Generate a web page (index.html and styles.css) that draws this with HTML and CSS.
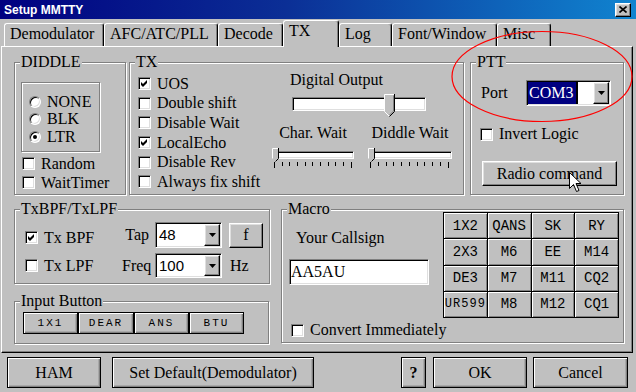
FILE: index.html
```html
<!DOCTYPE html>
<html lang="en">
<head>
    <meta charset="UTF-8">
    <title>Setup MMTTY</title>
    <link rel="stylesheet" href="styles.css">
</head>
<body>
<div class="window">
    <div class="titlebar">
        <span class="title">Setup MMTTY</span>
        <span class="close raised"><svg width="8" height="7" viewBox="0 0 8 7"><path d="M0.5 0.5L7.5 6.5M7.5 0.5L0.5 6.5" stroke="#000" stroke-width="1.6"/></svg></span>
    </div>

    <div class="tabs">
        <div class="tab t-demod">Demodulator</div>
        <div class="tab t-afc">AFC/ATC/PLL</div>
        <div class="tab t-decode">Decode</div>
        <div class="tab t-tx active">TX</div>
        <div class="tab t-log">Log</div>
        <div class="tab t-font">Font/Window</div>
        <div class="tab t-misc">Misc</div>
    </div>

    <div class="page">
        <div class="row">
            <div class="group diddle">
                <span class="legend">DIDDLE</span>
                <div class="etched radios">
                    <div class="opt radio-row"><span class="radio"></span>NONE</div>
                    <div class="opt radio-row"><span class="radio"></span>BLK</div>
                    <div class="opt radio-row"><span class="radio on"></span>LTR</div>
                </div>
                <div class="diddle-checks">
                    <div class="opt"><span class="check"></span>Random</div>
                    <div class="opt"><span class="check"></span>WaitTimer</div>
                </div>
            </div>

            <div class="group txg">
                <span class="legend">TX</span>
                <div class="tx-body">
                    <div class="tx-checks">
                        <div class="opt"><span class="check"><svg width="7" height="7" viewBox="0 0 7 7"><path d="M0 2L2 4L6 0V3L2 7L0 5Z"/></svg></span>UOS</div>
                        <div class="opt"><span class="check"></span>Double shift</div>
                        <div class="opt"><span class="check"></span>Disable Wait</div>
                        <div class="opt"><span class="check"><svg width="7" height="7" viewBox="0 0 7 7"><path d="M0 2L2 4L6 0V3L2 7L0 5Z"/></svg></span>LocalEcho</div>
                        <div class="opt"><span class="check"></span>Disable Rev</div>
                        <div class="opt"><span class="check"></span>Always fix shift</div>
                    </div>
                    <div class="tx-sliders">
                        <div class="do-label">Digital Output</div>
                        <div class="track big">
                            <svg class="thumb big-thumb" width="11" height="23" viewBox="0 0 11 23">
                                <path d="M0.5 0.5H10.5V17.5L5.5 22.5L0.5 17.5Z" fill="#c0c0c0"/>
                                <path d="M0.5 17.5V0.5H10" fill="none" stroke="#fff"/>
                                <path d="M10.5 0V17.5L5.5 22.5" fill="none" stroke="#000"/>
                                <path d="M9.5 1.5V17L5.5 21" fill="none" stroke="#808080"/>
                                <path d="M0.5 17.5L5 22" fill="none" stroke="#fff"/>
                            </svg>
                        </div>
                        <div class="small-sliders">
                            <div class="small-slider">
                                <div class="slider-label">Char. Wait</div>
                                <div class="track small">
                                    <svg class="thumb small-thumb" width="7" height="14" viewBox="0 0 7 14">
                                        <path d="M0.5 0.5H6.5V10.5L3.5 13.5L0.5 10.5Z" fill="#c0c0c0"/>
                                        <path d="M0.5 10.5V0.5H6" fill="none" stroke="#fff"/>
                                        <path d="M6.5 0V10.5L3.5 13.5" fill="none" stroke="#000"/>
                                    </svg>
                                </div>
                                <svg class="ticks" width="82" height="6" viewBox="0 0 82 6"><path d="M2.5 0V6M10.5 0V4M17.5 0V4M25.5 0V4M33.5 0V4M40.5 0V4M48.5 0V4M56.5 0V4M63.5 0V4M71.5 0V4M79.5 0V6" stroke="#000"/></svg>
                            </div>
                            <div class="small-slider">
                                <div class="slider-label">Diddle Wait</div>
                                <div class="track small">
                                    <svg class="thumb small-thumb" width="7" height="14" viewBox="0 0 7 14">
                                        <path d="M0.5 0.5H6.5V10.5L3.5 13.5L0.5 10.5Z" fill="#c0c0c0"/>
                                        <path d="M0.5 10.5V0.5H6" fill="none" stroke="#fff"/>
                                        <path d="M6.5 0V10.5L3.5 13.5" fill="none" stroke="#000"/>
                                    </svg>
                                </div>
                                <svg class="ticks" width="84" height="6" viewBox="0 0 84 6"><path d="M2.5 0V6M10.5 0V4M18.5 0V4M25.5 0V4M33.5 0V4M41.5 0V4M49.5 0V4M56.5 0V4M64.5 0V4M72.5 0V4M80.5 0V6" stroke="#000"/></svg>
                            </div>
                        </div>
                    </div>
                </div>
            </div>

            <div class="group ptt">
                <span class="legend">PTT</span>
                <div class="ptt-port">
                    <span class="port-lbl">Port</span>
                    <div class="sunken combo com">
                        <span class="sel">COM3</span>
                        <span class="drop raised"><svg width="7" height="4" viewBox="0 0 7 4"><path d="M0 0H7L3.5 4Z"/></svg></span>
                    </div>
                </div>
                <div class="opt invert"><span class="check"></span>Invert Logic</div>
                <div class="raised btn radio-cmd">Radio command</div>
            </div>
        </div>

        <div class="row">
            <div class="leftcol">
                <div class="group bpf">
                    <span class="legend">TxBPF/TxLPF</span>
                    <div class="bpf-row">
                        <div class="bpf-check first"><div class="opt"><span class="check"><svg width="7" height="7" viewBox="0 0 7 7"><path d="M0 2L2 4L6 0V3L2 7L0 5Z"/></svg></span>Tx BPF</div></div>
                        <span class="bpf-lbl">Tap</span>
                        <div class="sunken combo num">
                            <span class="val">48</span>
                            <span class="drop raised"><svg width="7" height="4" viewBox="0 0 7 4"><path d="M0 0H7L3.5 4Z"/></svg></span>
                        </div>
                        <div class="raised btn f-btn">f</div>
                    </div>
                    <div class="bpf-row second">
                        <div class="bpf-check"><div class="opt"><span class="check"></span>Tx LPF</div></div>
                        <span class="bpf-lbl">Freq</span>
                        <div class="sunken combo num">
                            <span class="val">100</span>
                            <span class="drop raised"><svg width="7" height="4" viewBox="0 0 7 4"><path d="M0 0H7L3.5 4Z"/></svg></span>
                        </div>
                        <span class="hz">Hz</span>
                    </div>
                </div>

                <div class="group inbtn">
                    <span class="legend">Input Button</span>
                    <div class="inbtn-row">
                        <span class="framed kbtn">1X1</span>
                        <span class="framed kbtn wide">DEAR</span>
                        <span class="framed kbtn">ANS</span>
                        <span class="framed kbtn">BTU</span>
                    </div>
                </div>
            </div>

            <div class="group macro">
                <div class="macro-left">
                    <span class="legend">Macro</span>
                    <div class="callsign-lbl">Your Callsign</div>
                    <div class="sunken callsign">AA5AU</div>
                    <div class="opt convert"><span class="check"></span>Convert Immediately</div>
                </div>
                <div class="mgrid">
                    <span>1X2</span><span>QANS</span><span>SK</span><span>RY</span>
                    <span>2X3</span><span>M6</span><span>EE</span><span>M14</span>
                    <span>DE3</span><span>M7</span><span>M11</span><span>CQ2</span>
                    <span class="tight">UR599</span><span>M8</span><span>M12</span><span>CQ1</span>
                </div>
            </div>
        </div>
    </div>

    <div class="bottom">
        <div class="framed bbtn b-ham">HAM</div>
        <div class="framed bbtn b-def">Set Default(Demodulator)</div>
        <div class="framed bbtn b-help">?</div>
        <div class="framed bbtn b-ok">OK</div>
        <div class="framed bbtn b-cancel">Cancel</div>
    </div>

    <svg class="ellipse" width="186" height="96" viewBox="0 0 186 96"><ellipse cx="92" cy="47.5" rx="90" ry="45" fill="none" stroke="#ff0000" stroke-width="1.2"/></svg>
    <svg class="cursor" width="13" height="21" viewBox="0 0 13 21"><path d="M0.5 0.5V16.5L4.5 12.5L7.5 19.5L10 18.5L7 11.5H12Z" fill="#fff" stroke="#000"/></svg>
</div>
</body>
</html>
```

FILE: styles.css
```css
* {
    box-sizing: border-box;
}
body {
    margin: 0;
    background: #c0c0c0;
    font-family: "Liberation Serif", "Times New Roman", serif;
    font-size: 16px;
    line-height: 18px;
    color: #000;
}
.window {
    position: relative;
    width: 636px;
    height: 392px;
    overflow: hidden;
    background: #c0c0c0;
}

/* 3d borders */
.raised {
    background: #c0c0c0;
    border: 1px solid;
    border-color: #fff #000 #000 #fff;
    box-shadow: inset -1px -1px #808080, inset 1px 1px #dfdfdf;
}
.sunken {
    background: #fff;
    border: 1px solid;
    border-color: #808080 #fff #fff #808080;
    box-shadow: inset 1px 1px #000, inset -1px -1px #dfdfdf;
}
.framed {
    background: #c0c0c0;
    border: 1px solid #000;
    box-shadow: inset 1px 1px #fff, inset -1px -1px #808080, inset -2px -2px #a8a8a8;
}
.etched {
    border: 1px solid #808080;
    box-shadow: inset 1px 1px #fff, 1px 1px #fff;
}
.btn, .bbtn, .kbtn {
    display: flex;
    align-items: center;
    justify-content: center;
    white-space: nowrap;
}

/* title bar */
.titlebar {
    display: flex;
    align-items: center;
    justify-content: space-between;
    height: 19px;
    padding: 0 5px 0 4px;
    background: linear-gradient(to right, #000080 0%, #0b2f96 45%, #1084d0 100%);
}
.title {
    color: #fff;
    font-family: "Liberation Sans", Arial, sans-serif;
    font-size: 12px;
    font-weight: bold;
    line-height: 14px;
}
.close {
    display: flex;
    align-items: center;
    justify-content: center;
    width: 16px;
    height: 14px;
}

/* tabs */
.tabs {
    display: flex;
    align-items: flex-end;
    height: 27px;
    padding-left: 4px;
}
.tab {
    height: 23px;
    padding: 1px 0 0 5px;
    background: #c0c0c0;
    border: 1px solid #fff;
    border-right-color: #000;
    border-bottom: 0;
    border-radius: 3px 3px 0 0;
    box-shadow: inset -1px 0 #808080;
    white-space: nowrap;
}
.tab.active {
    position: relative;
    z-index: 1;
    height: 27px;
    margin-bottom: -1px;
}
.t-demod { width: 100px; }
.t-afc { width: 114px; }
.t-decode { width: 65px; }
.t-tx { width: 56px; }
.t-log { width: 53px; }
.t-font { width: 105px; }
.t-misc { width: 54px; }

.page {
    width: 632px;
    height: 307px;
    margin-left: 1px;
    padding: 15px 0 0 12px;
    border: 1px solid;
    border-color: #fff #000 #000 #fff;
    box-shadow: inset -1px -1px #808080;
}
.row {
    display: flex;
}
.row + .row {
    margin-top: 14px;
}

/* group boxes */
.group {
    border: 1px solid #808080;
    box-shadow: inset 1px 1px #fff, 1px 1px #fff;
}
.legend {
    display: block;
    width: max-content;
    height: 16px;
    margin: -9px 0 0 5px;
    padding: 0 1px;
    line-height: 16px;
    background: #c0c0c0;
}
.opt {
    display: flex;
    align-items: center;
    height: 19px;
    white-space: nowrap;
}
.check {
    flex: none;
    display: flex;
    align-items: center;
    justify-content: center;
    width: 13px;
    height: 13px;
    margin-right: 6px;
    background: #fff;
    border: 1px solid;
    border-color: #808080 #fff #fff #808080;
    box-shadow: inset 1px 1px #000, inset -1px -1px #dfdfdf;
}
.radio {
    position: relative;
    flex: none;
    width: 12px;
    height: 12px;
    margin-right: 6px;
    border-radius: 50%;
    background: #fff;
    border: 1px solid;
    border-color: #808080 #fff #fff #808080;
    box-shadow: inset 1px 1px #000, inset -1px -1px #dfdfdf;
}
.radio.on::after {
    content: "";
    position: absolute;
    left: 3px;
    top: 3px;
    width: 4px;
    height: 4px;
    border-radius: 50%;
    background: #000;
}

/* DIDDLE */
.diddle {
    width: 112px;
    height: 133px;
}
.radios {
    width: 79px;
    height: 70px;
    margin: 12px 0 0 6px;
    padding: 10px 0 0 7px;
}
.radio-row {
    height: 17.5px;
}
.diddle-checks {
    margin: 2px 0 0 7px;
}

/* TX */
.txg {
    width: 335px;
    height: 133px;
    margin-left: 3px;
}
.tx-body {
    display: flex;
}
.tx-checks {
    width: 142px;
    padding: 4px 0 0 8px;
}
.tx-checks .opt {
    height: 19.6px;
}
.tx-sliders {
    width: 190px;
    padding-top: 1px;
}
.do-label {
    margin-left: 18px;
}
.track {
    position: relative;
    background: #fff;
    border: 1px solid;
    border-color: #808080 #fff #fff #808080;
    box-shadow: inset 1px 1px #000, inset -1px -1px #dfdfdf;
}
.track.big {
    width: 134px;
    height: 14px;
    margin: 8px 0 0 20px;
}
.thumb {
    position: absolute;
    display: block;
}
.big-thumb {
    left: 91px;
    top: -4px;
}
.small-thumb {
    left: -1px;
    top: -4px;
}
.small-sliders {
    display: flex;
    margin-top: 13px;
}
.small-slider {
    width: 82px;
}
.small-slider + .small-slider {
    width: 84px;
    margin-left: 14px;
}
.slider-label {
    text-align: center;
    white-space: nowrap;
}
.track.small {
    width: 100%;
    height: 8px;
    margin-top: 9px;
}
.ticks {
    display: block;
    margin-top: 3px;
}

/* PTT */
.ptt {
    width: 154px;
    height: 133px;
    margin-left: 6px;
}
.ptt-port {
    display: flex;
    align-items: center;
    margin: 10px 0 0 10px;
}
.port-lbl {
    width: 45px;
}
.combo {
    display: flex;
    justify-content: space-between;
    padding: 1px;
}
.combo.com {
    width: 85px;
    height: 26px;
}
.sel {
    width: 50px;
    height: 100%;
    padding-left: 1px;
    line-height: 22px;
    color: #fff;
    background: #000080;
    border-right: 2px solid #000;
}
.drop {
    display: flex;
    align-items: center;
    justify-content: center;
    width: 16px;
    height: 100%;
}
.drop svg {
    display: block;
}
.invert {
    height: 18px;
    margin: 19px 0 0 9px;
}
.radio-cmd {
    width: 135px;
    height: 25px;
    margin: 18px 0 0 11px;
}

/* TxBPF / Input Button */
.leftcol {
    display: flex;
    flex-direction: column;
}
.bpf {
    width: 256px;
    height: 75px;
}
.bpf-row {
    display: flex;
    align-items: center;
    height: 26px;
    margin-top: 5px;
}
.bpf-row.second {
    height: 25px;
}
.bpf-check {
    width: 107px;
    padding-left: 10px;
}
.bpf-check.first {
    padding-top: 5px;
}
.bpf-lbl {
    width: 33px;
    padding-right: 6px;
    text-align: right;
}
.combo.num {
    width: 67px;
    height: 100%;
    font-family: "Liberation Sans", Arial, sans-serif;
    font-size: 15px;
}
.val {
    padding-left: 2px;
    line-height: 22px;
}
.f-btn {
    width: 34px;
    height: 25px;
    margin-left: 7px;
}
.hz {
    margin-left: 8px;
}
.inbtn {
    width: 255px;
    height: 43px;
    margin-top: 17px;
}
.inbtn-row {
    display: flex;
    margin: 3px 0 0 8px;
}
.kbtn {
    width: 55px;
    height: 22px;
    font-family: "Liberation Mono", "Courier New", monospace;
    font-size: 11px;
    letter-spacing: 2px;
}
.kbtn.wide {
    width: 56px;
}

/* Macro */
.macro {
    display: flex;
    width: 343px;
    height: 134px;
    margin-left: 11px;
}
.macro-left {
    width: 161px;
}
.callsign-lbl {
    margin: 12px 0 0 14px;
}
.callsign {
    width: 140px;
    height: 26px;
    margin: 12px 0 0 7px;
    padding: 3px 1px;
}
.convert {
    height: 18px;
    margin: 36px 0 0 9px;
}
.mgrid {
    display: grid;
    grid-template-columns: repeat(4, 1fr);
    grid-template-rows: repeat(4, 1fr);
    gap: 1px;
    width: 176px;
    height: 106px;
    margin-top: 2px;
    padding: 1px;
    background: #000;
}
.mgrid span {
    display: flex;
    align-items: center;
    justify-content: center;
    background: #c0c0c0;
    box-shadow: inset 1px 1px #fff, inset -1px -1px #808080;
    font-family: "Liberation Mono", "Courier New", monospace;
    font-size: 14px;
}
.mgrid span.tight {
    font-size: 12px;
    letter-spacing: 1px;
}

/* bottom buttons */
.bottom {
    display: flex;
    height: 31px;
    margin-top: 4px;
    padding-left: 7px;
}
.bbtn {
    height: 31px;
}
.b-ham { width: 94px; }
.b-def { width: 202px; margin-left: 11px; }
.b-help { width: 25px; margin-left: 87px; font-weight: bold; }
.b-ok { width: 94px; margin-left: 7px; }
.b-cancel { width: 95px; margin-left: 6px; }

/* overlays */
.ellipse {
    position: absolute;
    left: 450px;
    top: 29px;
}
.cursor {
    position: absolute;
    left: 569px;
    top: 172px;
}
```
